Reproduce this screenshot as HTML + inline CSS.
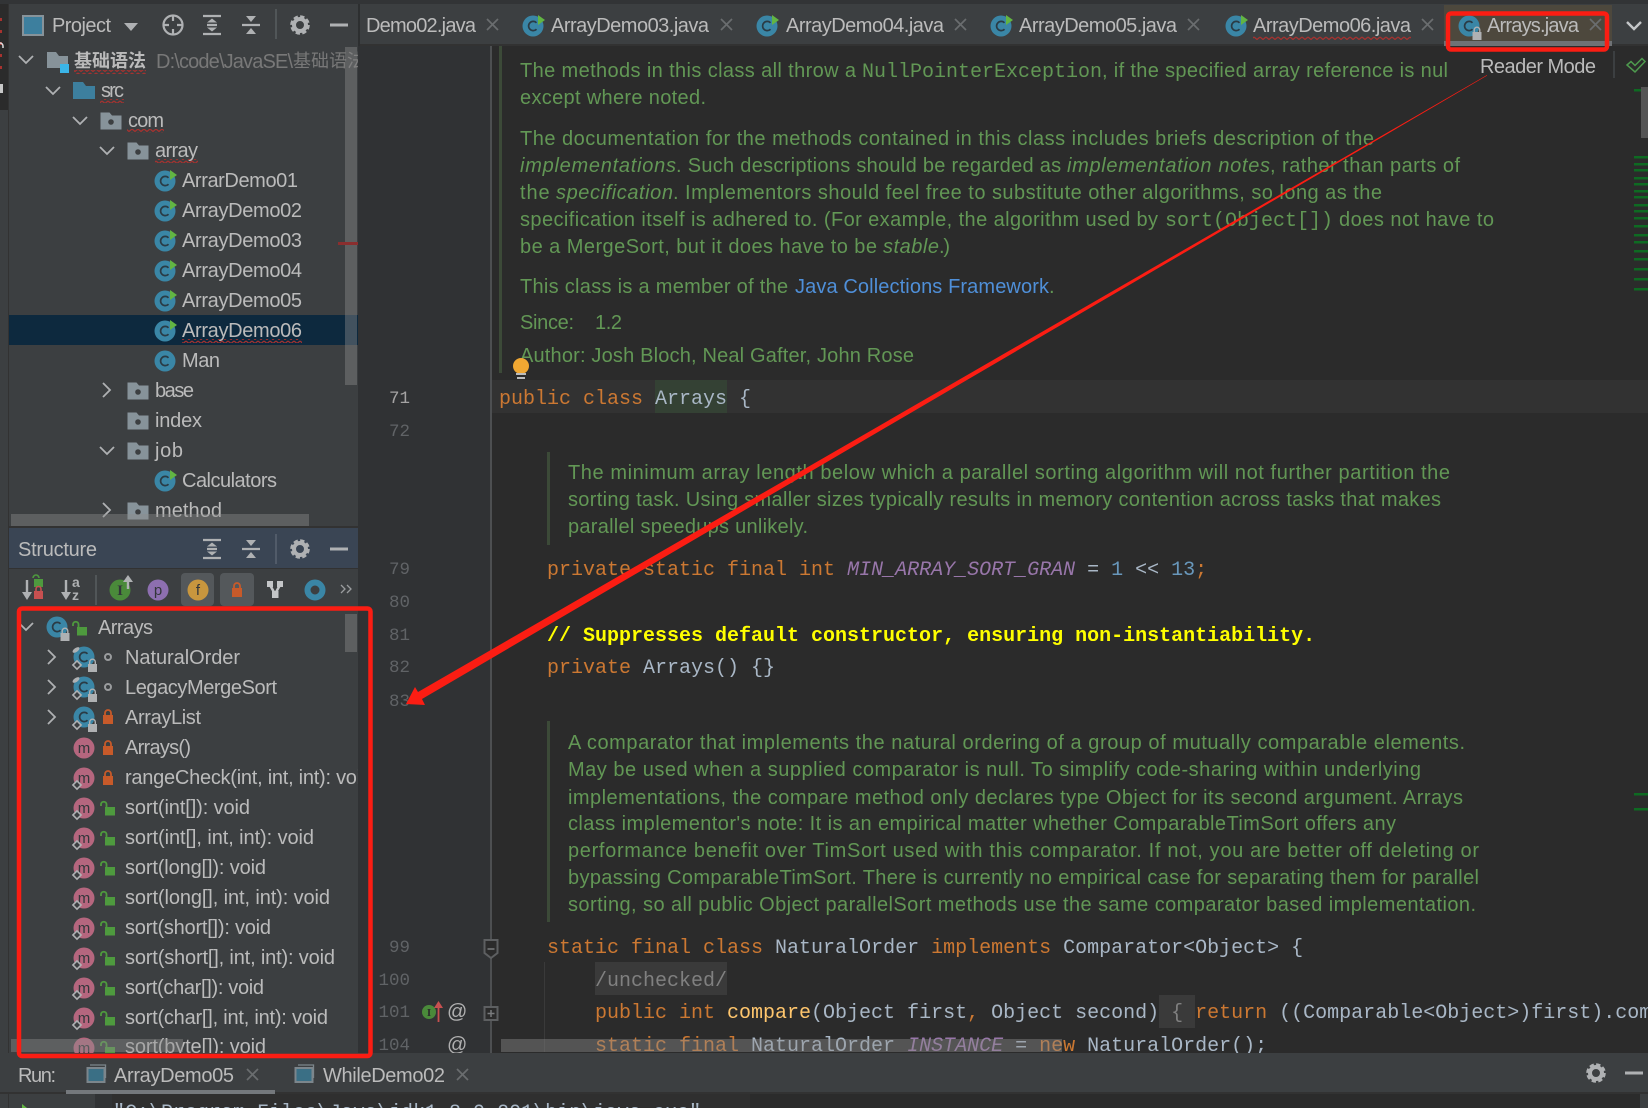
<!DOCTYPE html>
<html lang="en"><head><meta charset="utf-8"><title>Arrays.java</title>
<style>
html,body{margin:0;padding:0;background:#2b2b2b;width:1648px;height:1108px;overflow:hidden}
svg{display:block}
text{font-family:"Liberation Sans","Noto Sans CJK SC",sans-serif;font-size:20px;fill:#bbb;white-space:pre}
.d text{fill:#629755;font-size:20px}
.d .i{font-style:italic}
.d .m{font-family:"Liberation Mono",monospace}
.c text{font-family:"Liberation Mono",monospace;font-size:20px;fill:#a9b7c6}
.k{fill:#cc7832 !important}.p{fill:#9876aa !important;font-style:italic}.n{fill:#6897bb !important}
.ln text{font-family:"Liberation Mono",monospace;font-size:17.5px;fill:#606366;text-anchor:end}
.x{stroke:#6a6d6f;stroke-width:1.7;fill:none}
.ch{stroke:#afb1b3;stroke-width:1.8;fill:none}
.bar{fill:rgba(140,140,140,.42)}
.ic{font-size:15px !important;fill:#33363a !important;text-anchor:middle}
</style></head><body>
<svg width="1648" height="1108" viewBox="0 0 1648 1108" xmlns="http://www.w3.org/2000/svg">
<defs>
<pattern id="sq" width="6" height="4" patternUnits="userSpaceOnUse"><path d="M0,1 L3,3.5 L6,1" fill="none" stroke="#a8322f" stroke-width="1.2"/></pattern>
<symbol id="cls" overflow="visible"><circle r="10.5" fill="#3a86a6"/><path d="M3.5,-3.2 A4.6,4.6 0 1 0 3.5,3.2" fill="none" stroke="#2a3b45" stroke-width="1.7"/></symbol>
<symbol id="run" overflow="visible"><use href="#cls"/><polygon points="5,-11 12,-6 5,-1" fill="#62b543"/></symbol>
<symbol id="pk" overflow="visible"><path d="M-10.5,-8.5 H-1.5 L1,-5.5 H10.5 V8.5 H-10.5 Z" fill="#87939a"/><circle cy="1" r="2.8" fill="#3c3f41"/></symbol>
<symbol id="gl" overflow="visible"><rect x="-4.5" y="-1" width="9" height="8" fill="#afb1b3"/><path d="M-2.8,-1 V-3 A2.8,2.8 0 0 1 2.8,-3 V-1" fill="none" stroke="#afb1b3" stroke-width="1.4"/></symbol>
<symbol id="ol" overflow="visible"><rect x="-5" y="-2" width="10" height="9" fill="#c75a2a"/><path d="M-3,-2 V-4 A3,3 0 0 1 3,-4 V-2" fill="none" stroke="#c75a2a" stroke-width="1.8"/></symbol>
<symbol id="op" overflow="visible"><rect x="-3" y="-1" width="10" height="8.5" fill="#4e9a3e"/><path d="M-7,-2 V-4 A2.8,2.8 0 0 1 -1.5,-4 V-1" fill="none" stroke="#4e9a3e" stroke-width="1.8"/></symbol>
<symbol id="dot" overflow="visible"><circle r="3" fill="none" stroke="#9a9c9e" stroke-width="2"/></symbol>
<symbol id="dm" overflow="visible"><rect x="-2.9" y="-2.9" width="5.8" height="5.8" transform="rotate(45)" fill="#3c3f41" stroke="#afb1b3" stroke-width="1.6"/></symbol>
<symbol id="ms" overflow="visible"><circle r="10.5" fill="#b5667e"/><text y="5" class="ic">m</text></symbol>
<symbol id="nst" overflow="visible"><use href="#cls"/><use href="#gl" x="8.5" y="8"/><use href="#dm" x="-7" y="8"/></symbol>
<symbol id="exp" overflow="visible"><path d="M-9,-9 H9 M-9,9 H9 M-5,0 H5" stroke="#afb1b3" stroke-width="2.2"/><polygon points="-5,-2.5 0,-6.5 5,-2.5" fill="#afb1b3"/><polygon points="-5,2.5 0,6.5 5,2.5" fill="#afb1b3"/></symbol>
<symbol id="col" overflow="visible"><path d="M-9,0 H9" stroke="#afb1b3" stroke-width="2.2"/><polygon points="-5,-9 5,-9 0,-3" fill="#afb1b3"/><polygon points="-5,9 5,9 0,3" fill="#afb1b3"/></symbol>
<symbol id="gear" overflow="visible"><circle r="6" fill="none" stroke="#afb1b3" stroke-width="4"/><circle r="8.3" fill="none" stroke="#afb1b3" stroke-width="3" stroke-dasharray="4.2 2.3"/></symbol>
<symbol id="runi" overflow="visible"><rect x="-8.5" y="-6" width="17" height="14" fill="#3a6f85" stroke="#7c868c" stroke-width="2"/><path d="M-6,-9 H9.500 V4" fill="none" stroke="#7c868c" stroke-width="1.300"/></symbol>
<clipPath id="cp"><rect x="9" y="46" width="349" height="480"/></clipPath>
<clipPath id="cs"><rect x="9" y="610" width="349" height="443"/></clipPath>
<clipPath id="cr"><rect x="358" y="0" width="1290" height="1053"/></clipPath>
<clipPath id="ct"><rect x="360" y="0" width="1288" height="46"/></clipPath>
</defs>

<!-- base areas -->
<rect width="1648" height="1108" fill="#2b2b2b"/>
<rect x="0" y="0" width="8" height="1108" fill="#3c3f41"/>
<rect x="0" y="0" width="8" height="110" fill="#2b2b2b"/>
<rect x="8" y="0" width="1" height="1108" fill="#323232"/>
<path d="M1,18 V70" stroke="#a8322f" stroke-width="2" stroke-dasharray="3 9"/>
<path d="M0,43 a3,3 0 0 1 3,3 v2" fill="none" stroke="#ddd" stroke-width="1.500"/>
<rect x="0" y="84" width="3" height="9" fill="#c8c8c8"/>
<rect x="9" y="4" width="349" height="1049" fill="#3c3f41"/>
<rect x="0" y="0" width="1648" height="4" fill="#323436"/>
<rect x="358" y="46" width="132" height="1007" fill="#303234"/>
<rect x="490" y="46" width="2" height="1007" fill="#4d4f51"/>
<rect x="360" y="4" width="1288" height="42" fill="#3c3f41"/>
<rect x="360" y="44" width="1288" height="2" fill="#323232"/>
<rect x="358" y="4" width="2" height="42" fill="#2d2f30"/>

<!-- tabs -->
<g clip-path="url(#ct)">
<text x="366" y="32" textLength="110">Demo02.java</text>
<path class="x" d="M487,19 l11,11 m0,-11 l-11,11"/>
<use href="#run" x="533" y="26"/><text x="551" y="32" textLength="158">ArrayDemo03.java</text>
<path class="x" d="M721,19 l11,11 m0,-11 l-11,11"/>
<use href="#run" x="767" y="26"/><text x="786" y="32" textLength="158">ArrayDemo04.java</text>
<path class="x" d="M955,19 l11,11 m0,-11 l-11,11"/>
<use href="#run" x="1001" y="26"/><text x="1019" y="32" textLength="158">ArrayDemo05.java</text>
<path class="x" d="M1188,19 l11,11 m0,-11 l-11,11"/>
<use href="#run" x="1236" y="26"/><text x="1253" y="32" textLength="158">ArrayDemo06.java</text>
<rect x="1253" y="36" width="158" height="4" fill="url(#sq)"/>
<path class="x" d="M1422,19 l11,11 m0,-11 l-11,11"/>
<rect x="1444" y="5" width="168" height="41" fill="#4d483d"/>
<rect x="1444" y="41" width="168" height="5" fill="#6f7275"/>
<use href="#cls" x="1469" y="26"/><use href="#gl" x="1477" y="33"/>
<text x="1487" y="32" textLength="92">Arrays.java</text>
<path class="x" d="M1590,19 l11,11 m0,-11 l-11,11"/>
<path d="M1627,22 l7,7 l7,-7" fill="none" stroke="#c4c6c8" stroke-width="2.4"/>
</g>

<!-- project toolbar -->
<rect x="23" y="16" width="20" height="19" fill="#3d7f9e" stroke="#87939a" stroke-width="2"/>
<text x="52" y="32" textLength="59">Project</text>
<polygon points="124,23 138,23 131,31" fill="#afb1b3"/>
<g fill="none" stroke="#afb1b3" stroke-width="2.2"><circle cx="173" cy="25" r="9.5"/><path d="M173,15 V21 M173,29 V35 M163,25 H169 M177,25 H183"/></g>
<use href="#exp" x="212" y="25"/><use href="#col" x="251" y="25"/>
<rect x="275" y="9" width="2" height="30" fill="#515658"/>
<use href="#gear" x="300" y="25"/><rect x="330" y="23.5" width="18" height="3" fill="#afb1b3"/>

<!-- project tree -->
<g clip-path="url(#cp)">
<rect x="9" y="315" width="349" height="30" fill="#0d293e"/>
<path class="ch" d="M19,56 l7,7 l7,-7 M46,87 l7,7 l7,-7 M73,117 l7,7 l7,-7 M100,147 l7,7 l7,-7 M100,447 l7,7 l7,-7 M103,383 l7,7 l-7,7 M103,503 l7,7 l-7,7"/>
<path d="M47,52 H56 L59,56 H68 V68 H47 Z" fill="#87939a"/><rect x="60" y="64" width="9" height="9" fill="#3bb5e8"/>
<text x="74" y="67" style="font-size:18px;font-weight:bold" textLength="72">基础语法</text>
<rect x="74" y="70" width="72" height="4" fill="url(#sq)"/>
<text x="156" y="68" style="fill:#787878" textLength="137">D:\code\JavaSE\</text>
<text x="293" y="67" style="fill:#787878;font-size:18px">基础语法</text>
<path d="M73,82 H83 L86,86 H95 V99 H73 Z" fill="#3d7f9e"/>
<text x="101" y="97" textLength="23">src</text><rect x="100" y="99" width="24" height="4" fill="url(#sq)"/>
<use href="#pk" x="111" y="121"/><text x="128" y="127" textLength="36">com</text><rect x="127" y="129" width="37" height="4" fill="url(#sq)"/>
<use href="#pk" x="138" y="151"/><text x="155" y="157" textLength="43">array</text><rect x="155" y="159" width="43" height="4" fill="url(#sq)"/>
<use href="#run" x="165" y="181"/><text x="182" y="187" textLength="116">ArrarDemo01</text>
<use href="#run" x="165" y="211"/><text x="182" y="217" textLength="120">ArrayDemo02</text>
<use href="#run" x="165" y="241"/><text x="182" y="247" textLength="120">ArrayDemo03</text>
<use href="#run" x="165" y="271"/><text x="182" y="277" textLength="120">ArrayDemo04</text>
<use href="#run" x="165" y="301"/><text x="182" y="307" textLength="120">ArrayDemo05</text>
<use href="#run" x="165" y="331"/><text x="182" y="337" textLength="120">ArrayDemo06</text><rect x="182" y="339" width="120" height="4" fill="url(#sq)"/>
<use href="#cls" x="165" y="361"/><text x="182" y="367" textLength="38">Man</text>
<use href="#pk" x="138" y="391"/><text x="155" y="397" textLength="39">base</text>
<use href="#pk" x="138" y="421"/><text x="155" y="427" textLength="47">index</text>
<use href="#pk" x="138" y="451"/><text x="155" y="457" textLength="28">job</text>
<use href="#run" x="165" y="481"/><text x="182" y="487" textLength="95">Calculators</text>
<use href="#pk" x="138" y="511"/><text x="155" y="517" textLength="67">method</text>
</g>
<rect x="345" y="47" width="12" height="338" class="bar"/>
<rect x="338" y="242" width="20" height="3" fill="#8a2e2e"/>
<rect x="11" y="514" width="298" height="12" class="bar"/>

<!-- structure -->
<rect x="9" y="526" width="349" height="2" fill="#323232"/>
<rect x="9" y="528" width="349" height="40" fill="#3a4554"/>
<rect x="9" y="568" width="349" height="1" fill="#323232"/>
<text x="18" y="556" textLength="79">Structure</text>
<use href="#exp" x="212" y="549"/><use href="#col" x="251" y="549"/>
<rect x="275" y="534" width="2" height="30" fill="#515b69"/>
<use href="#gear" x="300" y="549"/><rect x="330" y="547.500" width="18" height="3" fill="#afb1b3"/>

<!-- structure toolbar -->
<path d="M27,580 V597" stroke="#afb1b3" stroke-width="2.4"/><polygon points="22,592 32,592 27,600" fill="#afb1b3"/>
<rect x="34" y="579" width="9" height="8" fill="#4e9a3e"/><path d="M33,578 A3,3 0 0 1 39,578" fill="none" stroke="#4e9a3e" stroke-width="1.6"/>
<rect x="34" y="591" width="9" height="8" fill="#c75050"/><path d="M36,591 V589 A2.500,2.500 0 0 1 41,589 V591" fill="none" stroke="#c75050" stroke-width="1.6"/>
<path d="M66,580 V597" stroke="#afb1b3" stroke-width="2.4"/><polygon points="61,592 71,592 66,600" fill="#afb1b3"/>
<text x="72" y="587" style="font-size:14px;font-weight:bold;fill:#afb1b3">a</text><text x="72" y="600" style="font-size:14px;font-weight:bold;fill:#afb1b3">z</text>
<rect x="95" y="575" width="2" height="30" fill="#515658"/>
<circle cx="120" cy="590" r="10.500" fill="#4a8a3a"/><text x="120" y="595" class="ic" style="font-family:'Liberation Serif',serif;font-weight:bold">I</text>
<path d="M128,589 V581" stroke="#afb1b3" stroke-width="2.4"/><polygon points="123,582 133,582 128,575" fill="#afb1b3"/>
<circle cx="158" cy="590" r="10.500" fill="#8d6fb0"/><text x="158" y="595" class="ic">p</text>
<rect x="181" y="573" width="33" height="33" rx="4" fill="#54585b"/><circle cx="198" cy="590" r="10.500" fill="#c8963e"/><text x="198" y="595" class="ic">f</text>
<rect x="220" y="573" width="34" height="33" rx="4" fill="#54585b"/><use href="#ol" x="237" y="590"/>
<path d="M270,585 L275,594 L280,585" fill="none" stroke="#c4c6c8" stroke-width="2.500"/>
<rect x="267" y="581" width="6" height="6" fill="#c4c6c8"/><rect x="277" y="581" width="6" height="6" fill="#c4c6c8"/><rect x="272" y="591" width="6.500" height="7" fill="#c4c6c8"/>
<circle cx="315" cy="590" r="7.500" fill="none" stroke="#3a86a6" stroke-width="6"/>
<path d="M341,585 l4,4 l-4,4 M347,585 l4,4 l-4,4" fill="none" stroke="#9a9c9e" stroke-width="1.300"/>

<!-- structure tree -->
<g clip-path="url(#cs)">
<path class="ch" d="M19,623 l7,7 l7,-7 M48,650 l7,7 l-7,7 M48,680 l7,7 l-7,7 M48,710 l7,7 l-7,7"/>
<use href="#cls" x="57" y="627"/><use href="#gl" x="65" y="634"/><use href="#op" x="80" y="628"/>
<text x="98" y="634" textLength="55">Arrays</text>
<use href="#nst" x="84" y="657"/><ellipse cx="76" cy="650" rx="4" ry="2" fill="#afb1b3" transform="rotate(-35 76 650)"/><use href="#dot" x="108" y="657"/><text x="125" y="664" textLength="115">NaturalOrder</text>
<use href="#nst" x="84" y="687"/><ellipse cx="76" cy="680" rx="4" ry="2" fill="#afb1b3" transform="rotate(-35 76 680)"/><use href="#dot" x="108" y="687"/><text x="125" y="694" textLength="152">LegacyMergeSort</text>
<use href="#nst" x="84" y="717"/><use href="#ol" x="108" y="717"/><text x="125" y="724" textLength="76">ArrayList</text>
<use href="#ms" x="84" y="748"/><use href="#ol" x="108" y="748"/><text x="125" y="754" textLength="66">Arrays()</text>
<use href="#ms" x="84" y="778"/><use href="#dm" x="77" y="785"/><use href="#ol" x="108" y="778"/><text x="125" y="784" textLength="247">rangeCheck(int, int, int): void</text>
<use href="#ms" x="84" y="808"/><use href="#dm" x="77" y="815"/><use href="#op" x="108" y="808"/><text x="125" y="814" textLength="125">sort(int[]): void</text>
<use href="#ms" x="84" y="838"/><use href="#dm" x="77" y="845"/><use href="#op" x="108" y="838"/><text x="125" y="844" textLength="189">sort(int[], int, int): void</text>
<use href="#ms" x="84" y="868"/><use href="#dm" x="77" y="875"/><use href="#op" x="108" y="868"/><text x="125" y="874" textLength="141">sort(long[]): void</text>
<use href="#ms" x="84" y="898"/><use href="#dm" x="77" y="905"/><use href="#op" x="108" y="898"/><text x="125" y="904" textLength="205">sort(long[], int, int): void</text>
<use href="#ms" x="84" y="928"/><use href="#dm" x="77" y="935"/><use href="#op" x="108" y="928"/><text x="125" y="934" textLength="146">sort(short[]): void</text>
<use href="#ms" x="84" y="958"/><use href="#dm" x="77" y="965"/><use href="#op" x="108" y="958"/><text x="125" y="964" textLength="210">sort(short[], int, int): void</text>
<use href="#ms" x="84" y="988"/><use href="#dm" x="77" y="995"/><use href="#op" x="108" y="988"/><text x="125" y="994" textLength="139">sort(char[]): void</text>
<use href="#ms" x="84" y="1018"/><use href="#dm" x="77" y="1025"/><use href="#op" x="108" y="1018"/><text x="125" y="1024" textLength="203">sort(char[], int, int): void</text>
<use href="#ms" x="84" y="1048"/><use href="#op" x="108" y="1048"/><text x="125" y="1053" textLength="141">sort(byte[]): void</text>
</g>
<rect x="345" y="614" width="12" height="38" class="bar"/>
<rect x="11" y="1039" width="172" height="13" class="bar"/>

<!-- editor -->
<g clip-path="url(#cr)">
<rect x="492" y="380" width="1156" height="33" fill="#323232"/>
<rect x="655" y="380" width="72" height="33" fill="#344134"/>
<rect x="499" y="46" width="3" height="327" fill="#3c4a38"/>
<rect x="547" y="452" width="3" height="93" fill="#3c4a38"/>
<rect x="547" y="721" width="3" height="201" fill="#3c4a38"/>
<rect x="544" y="962" width="1" height="90" fill="#3a3a3a"/>

<g class="d">
<text x="520" y="77" textLength="342">The methods in this class all throw a </text>
<text x="862" y="77" class="m">NullPointerException</text>
<text x="1102" y="77" textLength="346">, if the specified array reference is nul</text>
<text x="520" y="104" textLength="186">except where noted.</text>
<text x="520" y="145" textLength="854">The documentation for the methods contained in this class includes briefs description of the</text>
<text x="520" y="172" class="i" textLength="156">implementations</text>
<text x="676" y="172" textLength="391">. Such descriptions should be regarded as </text>
<text x="1067" y="172" class="i" textLength="203">implementation notes</text>
<text x="1270" y="172" textLength="190">, rather than parts of</text>
<text x="520" y="199" textLength="36">the </text>
<text x="556" y="199" class="i" textLength="117">specification</text>
<text x="673" y="199" textLength="709">. Implementors should feel free to substitute other algorithms, so long as the</text>
<text x="520" y="226" textLength="644">specification itself is adhered to. (For example, the algorithm used by </text>
<text x="1165" y="226" class="m">sort(Object[])</text>
<text x="1333" y="226" textLength="161"> does not have to</text>
<text x="520" y="253" textLength="363">be a MergeSort, but it does have to be </text>
<text x="883" y="253" class="i" textLength="56">stable</text>
<text x="939" y="253" textLength="11">.)</text>
<text x="520" y="293" textLength="274">This class is a member of the </text>
<text x="795" y="293" style="fill:#4f8fd8" textLength="254">Java Collections Framework</text>
<text x="1049" y="293" textLength="4">.</text>
<text x="520" y="329" textLength="54">Since:</text>
<text x="595" y="329" textLength="27">1.2</text>
<text x="520" y="362" textLength="394">Author: Josh Bloch, Neal Gafter, John Rose</text>
<text x="568" y="479" textLength="882">The minimum array length below which a parallel sorting algorithm will not further partition the</text>
<text x="568" y="506" textLength="873">sorting task. Using smaller sizes typically results in memory contention across tasks that makes</text>
<text x="568" y="533" textLength="240">parallel speedups unlikely.</text>
<text x="568" y="749" textLength="897">A comparator that implements the natural ordering of a group of mutually comparable elements.</text>
<text x="568" y="776" textLength="853">May be used when a supplied comparator is null. To simplify code-sharing within underlying</text>
<text x="568" y="804" textLength="895">implementations, the compare method only declares type Object for its second argument. Arrays</text>
<text x="568" y="830" textLength="828">class implementor's note: It is an empirical matter whether ComparableTimSort offers any</text>
<text x="568" y="857" textLength="911">performance benefit over TimSort used with this comparator. If not, you are better off deleting or</text>
<text x="568" y="884" textLength="911">bypassing ComparableTimSort. There is currently no empirical case for separating them for parallel</text>
<text x="568" y="911" textLength="908">sorting, so all public Object parallelSort methods use the same comparator based implementation.</text>
</g>

<g class="ln">
<text x="410" y="403" style="fill:#a4a3a3">71</text>
<text x="410" y="436">72</text>
<text x="410" y="574">79</text><text x="410" y="607">80</text><text x="410" y="640">81</text><text x="410" y="672">82</text><text x="410" y="706">83</text>
<text x="410" y="952">99</text><text x="410" y="985">100</text><text x="410" y="1017">101</text><text x="410" y="1050">104</text>
</g>

<g class="c">
<text x="499" y="404"><tspan class="k">public class </tspan>Arrays {</text>
<text x="547" y="575"><tspan class="k">private static final int </tspan><tspan class="p">MIN_ARRAY_SORT_GRAN</tspan> = <tspan class="n">1</tspan> &lt;&lt; <tspan class="n">13</tspan><tspan class="k">;</tspan></text>
<text x="547" y="641" style="fill:#ffff00;font-weight:bold">// Suppresses default constructor, ensuring non-instantiability.</text>
<text x="547" y="673"><tspan class="k">private </tspan>Arrays() {}</text>
<text x="547" y="953"><tspan class="k">static final class </tspan>NaturalOrder <tspan class="k">implements </tspan>Comparator&lt;Object&gt; {</text>
<rect x="595" y="962" width="132" height="33" fill="#3a3a3a"/>
<text x="595" y="986" style="fill:#808080">/unchecked/</text>
<rect x="1159" y="995" width="36" height="33" fill="#3a3a3a"/>
<text x="595" y="1018"><tspan class="k">public int </tspan><tspan style="fill:#ffc66d">compare</tspan>(Object first<tspan class="k">,</tspan> Object second) <tspan style="fill:#808080">{</tspan> <tspan class="k">return </tspan>((Comparable&lt;Object&gt;)first).com</text>
<text x="595" y="1051"><tspan class="k">static final </tspan>NaturalOrder <tspan class="p">INSTANCE</tspan> = <tspan class="k">new </tspan>NaturalOrder();</text>
</g>

<!-- gutter marks -->
<circle cx="521" cy="366" r="8" fill="#f0a732"/>
<rect x="516" y="373" width="10" height="2" fill="#bbb"/><rect x="517" y="377" width="8" height="2" fill="#bbb"/>
<path d="M484.500,940 h13 v13 l-6.500,5 l-6.500,-5 Z" fill="#2b2b2b" stroke="#5d5f61" stroke-width="2"/><path d="M487.500,949 h7" stroke="#7a7c7e" stroke-width="1.500"/>
<rect x="484.500" y="1007" width="13" height="13" fill="#2b2b2b" stroke="#5d5f61" stroke-width="2"/><path d="M487.500,1013.500 h7 M491,1010 v7" stroke="#7a7c7e" stroke-width="1.500"/>
<circle cx="429" cy="1012" r="7" fill="#4a8a3a"/><text x="429" y="1016" style="font-family:'Liberation Serif',serif;font-size:11px;font-weight:bold;fill:#2b2b2b;text-anchor:middle">I</text>
<path d="M438.500,1022 V1006" stroke="#c75050" stroke-width="1.800"/><polygon points="434,1008 443,1008 438.500,1001" fill="#c75050"/>
<text x="447" y="1018" style="font-size:20px;fill:#b0b0b0">@</text>
<text x="447" y="1051" style="font-size:20px;fill:#b0b0b0">@</text>

<!-- reader mode + error stripes -->
<text x="1480" y="73" textLength="116">Reader Mode</text>
<rect x="1613" y="51" width="2" height="27" fill="#3c3f41"/>
<path d="M1627,65 l4,-3.500 l4,4 l7,-7 l3,3 l-10,10.500 Z" fill="none" stroke="#4e9a4e" stroke-width="1.500"/>
<g fill="#0e6a22">
<rect x="1634" y="89" width="14" height="2.500"/><rect x="1634" y="156" width="14" height="2.500"/><rect x="1634" y="163" width="14" height="2.500"/><rect x="1634" y="169" width="14" height="2.500"/><rect x="1634" y="177" width="14" height="2.500"/><rect x="1634" y="183" width="14" height="2.500"/><rect x="1634" y="190" width="14" height="2.500"/><rect x="1634" y="196" width="14" height="2.500"/><rect x="1634" y="204" width="14" height="2.500"/><rect x="1634" y="210" width="14" height="2.500"/><rect x="1634" y="217" width="14" height="2.500"/><rect x="1634" y="225" width="14" height="2.500"/><rect x="1634" y="234" width="14" height="2.500"/><rect x="1634" y="241" width="14" height="2.500"/><rect x="1634" y="250" width="14" height="2.500"/><rect x="1634" y="258" width="14" height="2.500"/><rect x="1634" y="268" width="14" height="2.500"/><rect x="1634" y="278" width="14" height="2.500"/><rect x="1634" y="288" width="14" height="2.500"/><rect x="1634" y="793" width="14" height="2.500"/><rect x="1634" y="808" width="14" height="2.500"/>
</g>
<rect x="1641" y="87" width="7" height="51" fill="#555"/>
<rect x="501" y="1039" width="561" height="13" class="bar"/>
</g>

<!-- run bar -->
<rect x="0" y="1053" width="1648" height="40" fill="#3c3f41"/>
<rect x="0" y="1092" width="1648" height="2" fill="#323232"/>
<rect x="9" y="1094" width="86" height="14" fill="#3c3f41"/>
<rect x="95" y="1094" width="17" height="14" fill="#313335"/>
<rect x="112" y="1094" width="638" height="14" fill="#2f2f2f"/>
<rect x="1640" y="1094" width="8" height="14" fill="#3c3f41"/>
<polygon points="22,1104 27,1108 22,1108" fill="#62b543"/>
<text x="113" y="1118" style="font-family:'Liberation Mono',monospace;fill:#a9b7c6">"C:\Program Files\Java\jdk1.8.0_201\bin\java.exe"</text>
<text x="18" y="1082" textLength="38">Run:</text>
<use href="#runi" x="96" y="1074"/><text x="114" y="1082" textLength="120">ArrayDemo05</text>
<path class="x" d="M247,1069 l11,11 m0,-11 l-11,11"/>
<use href="#runi" x="304" y="1074"/><text x="323" y="1082" textLength="122">WhileDemo02</text>
<path class="x" d="M457,1069 l11,11 m0,-11 l-11,11"/>
<rect x="66" y="1090" width="209" height="4" fill="#74787c"/>
<use href="#gear" x="1596" y="1073"/><rect x="1625" y="1071.500" width="18" height="3" fill="#afb1b3"/>

<!-- red annotations -->
<polygon points="1487,75 418,692 415,687 406,704 425,705 422,699 1487,75.600" fill="#fb1d13"/>
<rect x="1448" y="13.500" width="159" height="36" rx="3" fill="none" stroke="#fb1d13" stroke-width="4.500"/>
<rect x="19" y="608.500" width="351.500" height="447.500" rx="3" fill="none" stroke="#fb1d13" stroke-width="4.500"/>
</svg>
</body></html>
